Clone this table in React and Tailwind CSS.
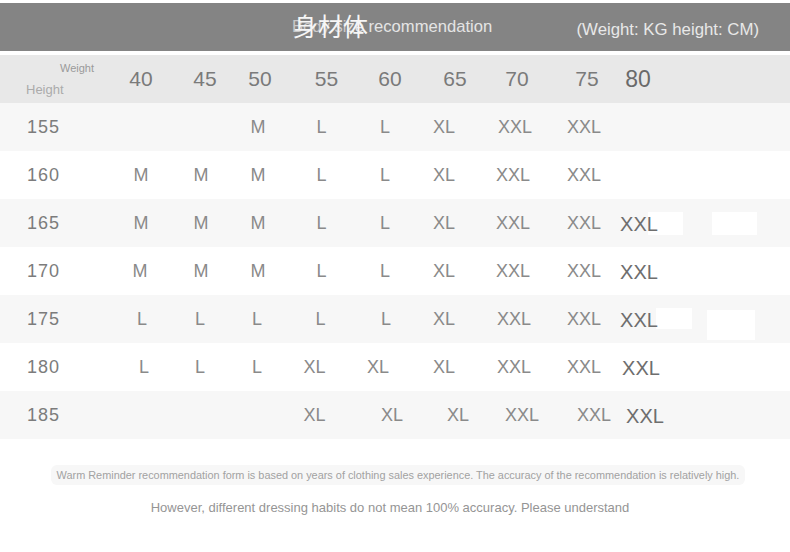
import React from "react";

const GRID = "grid grid-cols-[111px_60px_60px_54px_73px_54px_64px_74px_68px_42px] items-center";

const heads = [
  ["40", ""],
  ["45", "translate-x-[4px]"],
  ["50", "translate-x-[2px]"],
  ["55", "translate-x-[5px]"],
  ["60", "translate-x-[5px]"],
  ["65", "translate-x-[11px]"],
  ["70", "translate-x-[4px]"],
  ["75", "translate-x-[3px]"],
];

const rows = [
  { h: "155", bg: "bg-[#f7f7f7]", cells: [["", ""], ["", ""], ["M", ""], ["L", ""], ["L", ""], ["XL", ""], ["XXL", "translate-x-[2px]"], ["XXL", ""], ["", ""]] },
  { h: "160", bg: "bg-white", cells: [["M", ""], ["M", ""], ["M", ""], ["L", ""], ["L", ""], ["XL", ""], ["XXL", ""], ["XXL", ""], ["", ""]] },
  { h: "165", bg: "bg-[#f7f7f7]", cells: [["M", ""], ["M", ""], ["M", ""], ["L", ""], ["L", ""], ["XL", ""], ["XXL", ""], ["XXL", ""], ["XXL", ""]] },
  { h: "170", bg: "bg-white", cells: [["M", "-translate-x-[1px]"], ["M", ""], ["M", ""], ["L", ""], ["L", ""], ["XL", ""], ["XXL", ""], ["XXL", ""], ["XXL", ""]] },
  { h: "175", bg: "bg-[#f7f7f7]", cells: [["L", "translate-x-[1px]"], ["L", "-translate-x-[1px]"], ["L", "-translate-x-[1px]"], ["L", "-translate-x-[1px]"], ["L", "translate-x-[1px]"], ["XL", ""], ["XXL", "translate-x-[1px]"], ["XXL", ""], ["XXL", ""]] },
  { h: "180", bg: "bg-white", cells: [["L", "translate-x-[3px]"], ["L", "-translate-x-[1px]"], ["L", "-translate-x-[1px]"], ["XL", "-translate-x-[7px]"], ["XL", "-translate-x-[7px]"], ["XL", ""], ["XXL", "translate-x-[1px]"], ["XXL", ""], ["XXL", "translate-x-[2px]"]] },
  { h: "185", bg: "bg-[#f7f7f7]", cells: [["", ""], ["", ""], ["", ""], ["XL", "-translate-x-[7px]"], ["XL", "translate-x-[7px]"], ["XL", "translate-x-[14px]"], ["XXL", "translate-x-[9px]"], ["XXL", "translate-x-[10px]"], ["XXL", "translate-x-[6px]"]] },
];

function Row({ r }) {
  return (
    <div className={`${GRID} relative h-[48px] ${r.bg}`}>
      {r.h === "165" && (
        <>
          <div className="absolute left-[648px] top-[13px] w-[35px] h-[23px] bg-white" />
          <div className="absolute left-[712px] top-[13px] w-[45px] h-[23px] bg-white" />
        </>
      )}
      {r.h === "175" && (
        <>
          <div className="absolute left-[656px] top-[13px] w-[36px] h-[21px] bg-white" />
          <div className="absolute left-[707px] top-[15px] w-[48px] h-[30px] bg-white" />
        </>
      )}
      <div className="relative pl-[27px] text-[18px] tracking-[1px] text-[#7c7c7c]">{r.h}</div>
      {r.cells.map(([t, cls], i) => (
        <div key={i} className="relative flex justify-center">
          <span
            className={`${cls} whitespace-nowrap ${
              i === 8 ? "text-[20px] text-[#6e6e6e] mt-[2px]" : "text-[18px] text-[#8a8a8a]"
            }`}
          >
            {t}
          </span>
        </div>
      ))}
    </div>
  );
}

export default function App() {
  return (
    <div className="w-[790px] h-[552px] bg-white overflow-hidden font-['Liberation_Sans',Arial,sans-serif] pt-[3px]">
      {/* Title bar */}
      <div className="h-[48px] bg-[#848484] flex items-center">
        <div className="pl-[292px] relative">
          <span className="text-[16.6px] text-[#c9c9c9] whitespace-nowrap">
            Body si<span className="text-[#e4e4e4]">ze recommendation</span>
          </span>
          <span className="absolute left-[293px] top-[-5px] text-[25px] leading-[30px] text-[#f6f6f6] whitespace-nowrap font-['Noto_Sans_CJK_SC',sans-serif]">
            身材体
          </span>
        </div>
        <div className="ml-auto pr-[31px] pt-[5px] text-[16.8px] text-[#e8e8e8] whitespace-nowrap">
          (Weight: KG height: CM)
        </div>
      </div>

      {/* Header row */}
      <div className={`${GRID} mt-[4px] h-[48px] bg-[#e8e8e8]`}>
        <div className="flex flex-col h-[48px]">
          <div className="pl-[60px] pt-[7px] text-[11px] leading-[13px] text-[#9a9a9a]">Weight</div>
          <div className="pl-[26px] mt-[7px] text-[13px] leading-[15px] text-[#ababab]">Height</div>
        </div>
        {heads.map(([t, cls], i) => (
          <div key={i} className="flex justify-center">
            <span className={`${cls} text-[21px] text-[#7a7a7a]`}>{t}</span>
          </div>
        ))}
        <div className="flex justify-center">
          <span className="-translate-x-[1px] text-[23px] text-[#6a6a6a]">80</span>
        </div>
      </div>

      {rows.map((r) => (
        <Row key={r.h} r={r} />
      ))}

      {/* Footer */}
      <div className="flex flex-col items-center mt-[26px]">
        <div className="translate-x-[3px] bg-[#f7f7f7] rounded-[6px] px-[6px] py-[3px] text-[10.9px] leading-[14px] text-[#a2a2a2] whitespace-nowrap">
          Warm Reminder recommendation form is based on years of clothing sales experience. The accuracy of the recommendation is relatively high.
        </div>
        <div className="mt-[15px] -translate-x-[5px] text-[13px] leading-[16px] text-[#959595] whitespace-nowrap">
          However, different dressing habits do not mean 100% accuracy. Please understand
        </div>
      </div>
    </div>
  );
}
